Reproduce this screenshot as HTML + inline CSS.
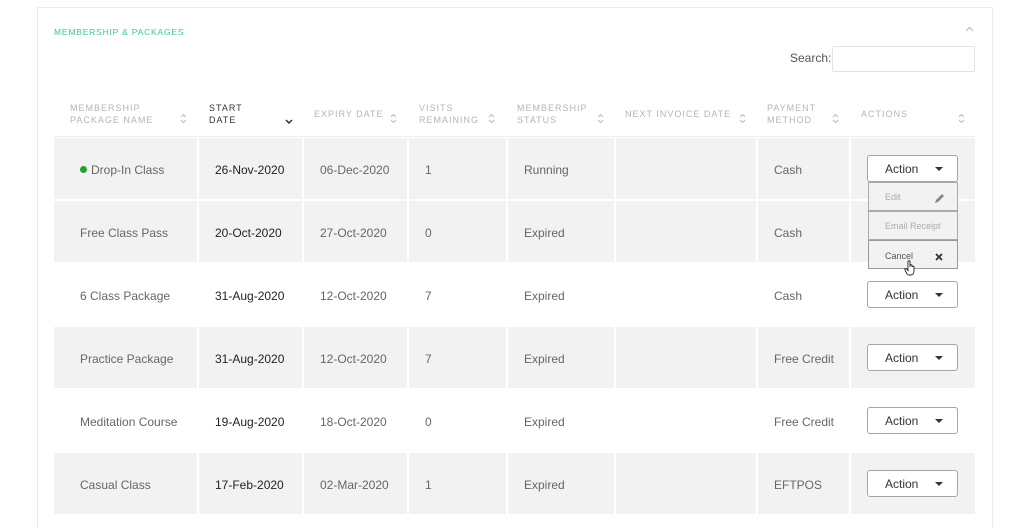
<!DOCTYPE html><html><head><style>
html,body{margin:0;width:1024px;height:528px;overflow:hidden}
body{background:#fff;position:relative;font-family:"Liberation Sans",sans-serif}
.a{position:absolute}
.panel{left:37px;top:7px;width:956px;height:530px;border:1px solid #ececec;box-sizing:border-box}
.h{font-size:9px;letter-spacing:1px;color:#b5b5b5;line-height:12px}
.c{position:absolute;font-size:12px;color:#666;line-height:14px}
.bg{position:absolute;height:61px;background:#f2f2f2}
.sort{position:absolute;width:7px;height:11px}
.btn{position:absolute;left:867px;width:91px;height:27px;border:1px solid #a5a5a5;border-radius:3px;box-sizing:border-box;background:#fff;font-size:12px;color:#333}
.btn span{position:absolute;left:17px;top:6px}
.btn i{position:absolute;right:14px;top:11px;border-left:4px solid transparent;border-right:4px solid transparent;border-top:4px solid #333}
.dd{position:absolute;left:868px;width:90px;height:29px;border:1px solid #aaa;box-sizing:border-box;background:#f2f2f2;font-size:9px;color:#aaa}
</style></head><body>
<div class="a panel"></div>
<div class="a" style="left:54px;top:27px;font-size:8.5px;letter-spacing:.8px;color:#3dc4a0">MEMBERSHIP &amp; PACKAGES</div>
<svg class="a" style="left:965px;top:26px" width="9" height="6"><path d="M1 5 L4.5 1.5 L8 5" fill="none" stroke="#bbb" stroke-width="1.2"/></svg>
<div class="a" style="left:790px;top:51px;font-size:12px;color:#555">Search:</div>
<div class="a" style="left:832px;top:46px;width:143px;height:26px;border:1px solid #e3e3e3;border-radius:2px;box-sizing:border-box"></div>

<div class="a h" style="left:70px;top:102px">MEMBERSHIP<br>PACKAGE NAME</div>
<div class="a h" style="left:209px;top:102px;color:#333">START<br>DATE</div>
<div class="a h" style="left:314px;top:108px">EXPIRY DATE</div>
<div class="a h" style="left:419px;top:102px">VISITS<br>REMAINING</div>
<div class="a h" style="left:517px;top:102px">MEMBERSHIP<br>STATUS</div>
<div class="a h" style="left:625px;top:108px">NEXT INVOICE DATE</div>
<div class="a h" style="left:767px;top:102px">PAYMENT<br>METHOD</div>
<div class="a h" style="left:861px;top:108px">ACTIONS</div>
<svg class="a" style="left:285px;top:119px" width="8" height="5"><path d="M1 1 L4 4 L7 1" fill="none" stroke="#333" stroke-width="1.5"/></svg>
<div id="sorts"></div>
<div class="a" style="left:54px;top:136px;width:921px;height:1px;background:#eee"></div>

<div id="rows"></div>
<script>
var s="";[180,390,488,597,739,832,958].forEach(function(x){s+='<svg class="sort" style="left:'+x+'px;top:113px" viewBox="0 0 7 11"><path d="M1 4 L3.5 1.5 L6 4 M1 7 L3.5 9.5 L6 7" fill="none" stroke="#bbb" stroke-width="1.1"/></svg>';});
document.getElementById('sorts').innerHTML=s;
var L=[54,199,304,409,508,616,758,851],R=975;
var rows=[["Drop-In Class","26-Nov-2020","06-Dec-2020","1","Running","","Cash",1],
["Free Class Pass","20-Oct-2020","27-Oct-2020","0","Expired","","Cash",1],
["6 Class Package","31-Aug-2020","12-Oct-2020","7","Expired","","Cash",0],
["Practice Package","31-Aug-2020","12-Oct-2020","7","Expired","","Free Credit",1],
["Meditation Course","19-Aug-2020","18-Oct-2020","0","Expired","","Free Credit",0],
["Casual Class","17-Feb-2020","02-Mar-2020","1","Expired","","EFTPOS",1]];
var h="";
rows.forEach(function(r,i){var y=138+i*63;
for(var c=0;c<8;c++){var l=L[c],w=(c<7?L[c+1]-2:R)-l;
if(r[7])h+='<div class="bg" style="left:'+l+'px;top:'+y+'px;width:'+w+'px"></div>';
if(c<7&&r[c]){var x=c==0?80:l+16;var col=c==1?'#222':'#666';
var t=r[c];if(i==0&&c==0){t='<span style="display:inline-block;width:7px;height:7px;border-radius:50%;background:#2a9d2a;margin-right:4px;vertical-align:1px"></span>'+t;}
h+='<div class="c" style="left:'+x+'px;top:'+(y+25)+'px;color:'+col+'">'+t+'</div>';}}
if(i!=1)h+='<div class="btn" style="top:'+(y+17)+'px"><span>Action</span><i></i></div>';
});
document.getElementById('rows').innerHTML=h;
</script>
<div class="dd" style="top:182px"><span class="a" style="left:16px;top:9px">Edit</span>
<svg class="a" style="left:65px;top:10px" width="11" height="11"><path d="M1 10 L2 7 L8 1 L10 3 L4 9 Z" fill="#888"/></svg></div>
<div class="dd" style="top:211px"><span class="a" style="left:16px;top:9px">Email Receipt</span></div>
<div class="dd" style="top:240px;height:29px;border-color:#999"><span class="a" style="left:16px;top:10px;color:#555">Cancel</span>
<svg class="a" style="left:66px;top:12px" width="8" height="8"><path d="M1 1 L7 7 M7 1 L1 7" stroke="#333" stroke-width="1.8"/></svg></div>
<svg class="a" style="left:904px;top:260px" width="12" height="16"><path d="M4 1.5 C4 0.5 6 0.5 6 1.5 L6 7 L6 5.5 C6 4.5 8 4.5 8 5.5 L8 7 C8 6 10 6 10 7 L10 11 C10 13 9 15 7 15 L5 15 C3.5 15 3 14 2 12 L0.8 9.5 C0.5 8.5 1.8 8 2.5 9 L4 10.5 Z" fill="#fff" stroke="#222" stroke-width="0.9"/></svg>
</body></html>
